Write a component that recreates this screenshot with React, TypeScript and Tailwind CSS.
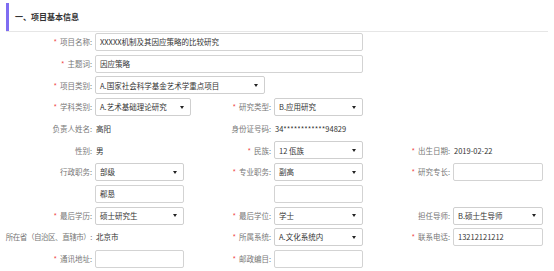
import type { ReactNode } from "react";

const Label = ({ text, req, className = "" }: { text: string; req?: boolean; className?: string }) => {
  return (
    <div className={`flex items-center justify-end pr-[3px] whitespace-nowrap text-[#777] ${className}`}>
      {req && <span className="mr-[3px] text-[#f04848]">*</span>}
      {text}:
    </div>
  );
};

const Value = ({ children }: { children: ReactNode }) => {
  return (
    <div className="flex items-center pl-[1px] whitespace-nowrap text-[#333]">
      {children}
    </div>
  );
};

const Input = ({ value = "", className = "w-full" }: { value?: string; className?: string }) => {
  return (
    <div
      className={`flex h-[18px] items-center rounded-[2px] border border-[#d3d3d3] bg-white px-[4px] whitespace-nowrap text-[#333] ${className}`}
    >
      {value}
    </div>
  );
};

const Select = ({ value, className = "w-full" }: { value: string; className?: string }) => {
  return (
    <div
      className={`flex h-[18px] items-center justify-between rounded-[2px] border border-[#cfcfcf] bg-white pl-[4px] pr-[6px] whitespace-nowrap text-[#333] ${className}`}
    >
      <span>{value}</span>
      <svg width="4" height="3" viewBox="0 0 4 3">
        <polygon points="0,0 4,0 2,3" fill="#222" />
      </svg>
    </div>
  );
};

const Empty = () => <div />;

export default function App() {
  return (
    <div className="h-[271px] w-[554px] bg-white pt-[3px] text-[7.5px] leading-none font-['Noto_Sans_CJK_SC',sans-serif]">
      <div className="ml-[6px] flex h-[28px] items-center border-l-[3px] border-[#7f6df2] pl-[6px] text-[8px] font-bold text-[#333]">
        一、项目基本信息
      </div>
      <div className="ml-[6px] h-px w-[542px] bg-[#e6e6e6]" />

      <div className="mt-[1px] grid grid-cols-[95px_89px_90px_89px_90px_90px] auto-rows-[18px] gap-y-[3.7px]">
        <Label text="项目名称" req />
        <div className="col-span-3">
          <Input value="XXXXX机制及其因应策略的比较研究" />
        </div>
        <Empty />
        <Empty />

        <Label text="主题词" req />
        <div className="col-span-3">
          <Input value="因应策略" />
        </div>
        <Empty />
        <Empty />

        <Label text="项目类别" req />
        <div className="col-span-5">
          <Select value="A.国家社会科学基金艺术学重点项目" className="w-[170px]" />
        </div>

        <Label text="学科类别" req />
        <div>
          <Select value="A.艺术基础理论研究" className="w-[96px]" />
        </div>
        <Label text="研究类型" req />
        <Select value="B.应用研究" />
        <Empty />
        <Empty />

        <Label text="负责人姓名" />
        <Value>高阳</Value>
        <Label text="身份证号码" />
        <Value>34************94829</Value>
        <Empty />
        <Empty />

        <Label text="性别" />
        <Value>男</Value>
        <Label text="民族" req />
        <Select value="12 佤族" />
        <Label text="出生日期" req />
        <Value>2019-02-22</Value>

        <Label text="行政职务" />
        <Select value="部级" />
        <Label text="专业职务" req />
        <Select value="副高" />
        <Label text="研究专长" req />
        <Input />

        <Empty />
        <Input value="郗恳" />
        <Empty />
        <Input />
        <Empty />
        <Empty />

        <Label text="最后学历" req />
        <Select value="硕士研究生" />
        <Label text="最后学位" req />
        <Select value="学士" />
        <Label text="担任导师" />
        <Select value="B.硕士生导师" />

        <Label text="所在省（自治区、直辖市）" className="tracking-[-0.45px]" />
        <Value>北京市</Value>
        <Label text="所属系统" req />
        <Select value="A.文化系统内" />
        <Label text="联系电话" req />
        <Input value="13212121212" />

        <Label text="通讯地址" req />
        <Input />
        <Label text="邮政编目" req />
        <Input />
        <Empty />
        <Empty />
      </div>
    </div>
  );
}
